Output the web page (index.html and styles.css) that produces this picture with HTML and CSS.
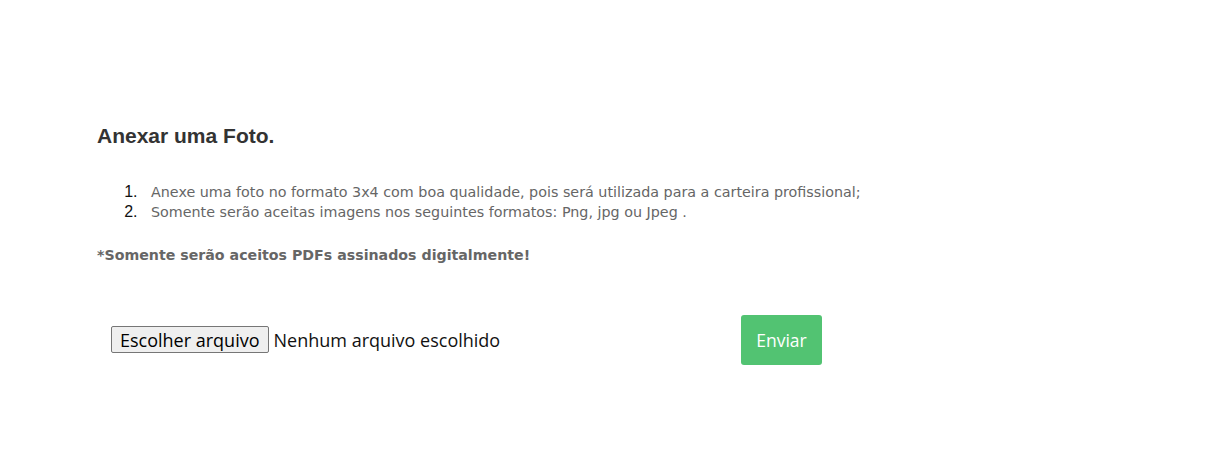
FILE: index.html
```html
<!DOCTYPE html>
<html lang="pt-BR">
<head>
<meta charset="utf-8">
<title>Anexar uma Foto</title>
<link rel="stylesheet" href="styles.css">
</head>
<body>
<main class="page">
  <h2 class="title">Anexar uma Foto.</h2>
  <ol class="rules">
    <li><span>Anexe uma foto no formato 3x4 com boa qualidade, pois será utilizada para a carteira profissional;</span></li>
    <li><span>Somente serão aceitas imagens nos seguintes formatos: Png, jpg ou Jpeg .</span></li>
  </ol>
  <p class="note">*Somente serão aceitos PDFs assinados digitalmente!</p>
  <form class="upload">
    <div class="file">
      <span class="file-btn">Escolher arquivo</span>
      <span class="file-name">Nenhum arquivo escolhido</span>
    </div>
    <button type="button" class="send">Enviar</button>
  </form>
</main>
</body>
</html>
```
FILE: styles.css
```css
html, body {
  margin: 0;
  padding: 0;
  background: #fff;
}
.page {
  padding: 123px 0 0 97px;
  font-family: "Liberation Sans", Arial, sans-serif;
}
.title {
  margin: 0;
  font-size: 21px;
  font-weight: bold;
  color: #333;
  line-height: 26px;
}
.rules {
  margin: 33px 0 0 0;
  padding-left: 45px;
  font-family: "Liberation Sans", Arial, sans-serif;
  font-size: 16px;
  color: #111;
  line-height: 20px;
}
.rules li {
  padding-left: 9px;
  height: 20px;
}
.rules li span {
  font-family: Verdana, "DejaVu Sans", sans-serif;
  font-size: 14.3px;
  color: #666;
  line-height: 20px;
}
.note {
  margin: 23px 0 0 0;
  font-family: Verdana, "DejaVu Sans", sans-serif;
  font-size: 14.2px;
  font-weight: bold;
  color: #666;
  line-height: 20px;
}
.upload {
  margin-top: 49px;
  display: flex;
  align-items: center;
}
.file {
  width: 630px;
  padding-left: 14px;
  display: flex;
  align-items: center;
  font-family: "Open Sans", "DejaVu Sans", sans-serif;
  font-size: 18px;
  color: #111;
}
.file-btn {
  box-sizing: border-box;
  height: 27px;
  padding: 0 8px;
  display: flex;
  align-items: center;
  background: #efefef;
  border: 1px solid #767676;
  border-radius: 2px;
  color: #000;
}
.file-name {
  margin-left: 5px;
}
.send {
  box-sizing: border-box;
  width: 81px;
  height: 50px;
  margin-top: 1px;
  border: none;
  border-radius: 3px;
  background: #52c372;
  color: #fff;
  font-family: "Open Sans", "DejaVu Sans", sans-serif;
  font-size: 17.5px;
}
```
